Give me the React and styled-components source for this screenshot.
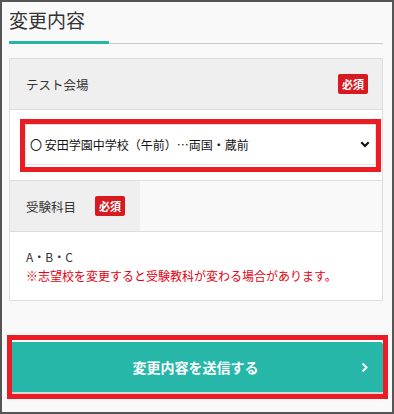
import React, { useState } from "react";
import styled, { createGlobalStyle } from "styled-components";

const GlobalStyle = createGlobalStyle`
  html, body {
    margin: 0;
    padding: 0;
    background: #f9f9f9;
  }
  body {
    font-family: "Noto Sans CJK JP", "Noto Sans", sans-serif;
    color: #333;
  }
  * {
    box-sizing: border-box;
  }
`;

const Frame = styled.div`
  width: 394px;
  height: 414px;
  border: 2px solid #555;
  background: #f9f9f9;
  padding: 4px 9px 0 7px;
  overflow: hidden;
`;

const Title = styled.h2`
  margin: 0;
  font-size: 19px;
  font-weight: 400;
  line-height: 28px;
  color: #333;
`;

const TitleRule = styled.div`
  display: flex;
  align-items: center;
  height: 3px;
  margin: 7px 0 14px;

  &::before {
    content: "";
    width: 100px;
    height: 3px;
    background: #26b6a8;
  }

  &::after {
    content: "";
    flex: 1;
    height: 1px;
    margin-top: 1px;
    background: #cccccc;
  }
`;

const Card = styled.div`
  border: 1px solid #dddddd;
  border-bottom: none;
`;

const HeadRow = styled.div`
  display: flex;
  align-items: center;
  height: 51px;
  border-bottom: 1px solid #dddddd;
`;

const LabelCell = styled.div`
  display: flex;
  align-items: center;
  justify-content: ${(p) => (p.$wide ? "space-between" : "flex-start")};
  gap: 19px;
  height: 100%;
  width: ${(p) => (p.$wide ? "100%" : "130px")};
  padding: ${(p) => (p.$wide ? "0 14px 0 16px" : "0 0 0 16px")};
  background: #efefef;
  white-space: nowrap;
`;

const Label = styled.span`
  flex-shrink: 0;
  font-size: 12.5px;
  color: #333;
`;

const Badge = styled.span`
  flex-shrink: 0;
  display: inline-block;
  width: 30px;
  height: 20px;
  line-height: 20px;
  border-radius: 2px;
  background: #d71920;
  color: #fff;
  font-size: 11px;
  font-weight: 700;
  text-align: center;
`;

const Body = styled.div`
  background: #fff;
  border-bottom: 1px solid #dddddd;
  padding: ${(p) => p.$pad};
`;

const Highlight = styled.div`
  border: 5px solid #ed1c24;
  background: #fff;
  padding: ${(p) => p.$pad || "0"};
  margin: ${(p) => p.$margin || "0"};
`;

const SelectWrap = styled.div`
  position: relative;
`;

const Select = styled.select`
  appearance: none;
  -webkit-appearance: none;
  display: block;
  width: 100%;
  height: 41px;
  border: 1px solid #e0e0e0;
  border-radius: 0;
  background: #fff;
  padding: 0 30px 0 4px;
  font-family: "Noto Sans CJK JP", sans-serif;
  font-size: 12px;
  color: #111;
  outline: none;
`;

const Caret = styled.svg`
  position: absolute;
  right: 6px;
  top: 17px;
  pointer-events: none;
`;

const Subjects = styled.p`
  margin: 0;
  font-size: 12px;
  line-height: 19px;
  color: #333;
`;

const Note = styled.p`
  margin: 0;
  font-size: 12px;
  line-height: 19px;
  color: #e60012;
`;

const Submit = styled.button`
  display: grid;
  grid-template-columns: 1fr auto 1fr;
  align-items: center;
  width: 100%;
  height: 50px;
  border: none;
  border-radius: 0 3px 0 0;
  background: #26b7a9;
  box-shadow: 0 2px 0 #d6d6d6;
  color: #fff;
  font-family: "Noto Sans CJK JP", sans-serif;
  font-size: 14px;
  font-weight: 700;
  cursor: pointer;
  padding: 0 4px 0 0;

  svg {
    justify-self: end;
    margin-right: 10px;
  }
`;

const SCHOOLS = ["〇 安田学園中学校（午前）…両国・蔵前"];

export default function App() {
  const [school, setSchool] = useState(SCHOOLS[0]);

  return (
    <>
      <GlobalStyle />
      <Frame>
        <Title>変更内容</Title>
        <TitleRule />
        <Card>
          <HeadRow>
            <LabelCell $wide>
              <Label>テスト会場</Label>
              <Badge>必須</Badge>
            </LabelCell>
          </HeadRow>
          <Body $pad="9px 1px 8px 10px">
            <Highlight $pad="0 0 2px 0">
              <SelectWrap>
                <Select value={school} onChange={(e) => setSchool(e.target.value)}>
                  {SCHOOLS.map((s) => (
                    <option key={s} value={s}>
                      {s}
                    </option>
                  ))}
                </Select>
                <Caret width="10" height="7" viewBox="0 0 10 7">
                  <path d="M1.3 1.3 5 5 8.7 1.3" fill="none" stroke="#111" strokeWidth="2.2" />
                </Caret>
              </SelectWrap>
            </Highlight>
          </Body>
          <HeadRow>
            <LabelCell>
              <Label>受験科目</Label>
              <Badge>必須</Badge>
            </LabelCell>
          </HeadRow>
          <Body $pad="15px 16px 15px 16px">
            <Subjects>A・B・C</Subjects>
            <Note>※志望校を変更すると受験教科が変わる場合があります。</Note>
          </Body>
        </Card>
        <Highlight $pad="2px 0 2px 0" $margin="34px -5px 0 -2px">
          <Submit type="button">
            <span />
            <span>変更内容を送信する</span>
            <svg width="8" height="11" viewBox="0 0 8 11">
              <path d="M1.5 1.5 5.5 5.5 1.5 9.5" fill="none" stroke="#fff" strokeWidth="2" />
            </svg>
          </Submit>
        </Highlight>
      </Frame>
    </>
  );
}
